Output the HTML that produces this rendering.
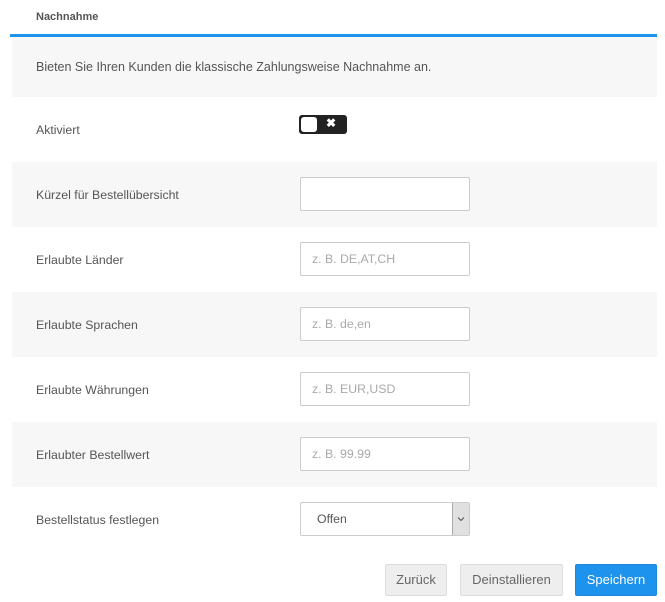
<!DOCTYPE html>
<html><head><meta charset="utf-8"><style>
*{box-sizing:border-box;margin:0;padding:0}
body{width:665px;height:602px;background:#fff;font-family:"Liberation Sans",sans-serif;font-size:12px;color:#555;position:relative;overflow:hidden}
.h{position:absolute;left:36px;top:11px;font-weight:bold;font-size:11px;color:#555}
.bar{position:absolute;left:10px;top:34px;width:647px;height:3px;background:#1e93ee}
.row{position:absolute;left:12px;width:645px;height:65px}
.g{background:#f7f7f7}
.lab{position:absolute;left:24px;top:26px;font-size:12.3px;color:#555}
.in{position:absolute;left:288px;top:15px;width:170px;height:34px;border:1px solid #ccc;border-radius:2px;background:#fff;padding:9px 11px;color:#aaa;font-size:12.3px}
.btn{position:absolute;top:564px;height:32px;border:1px solid #ddd;border-radius:2px;background:#eee;color:#666;font-size:13px;text-align:center;line-height:30px}
</style></head><body>
<div class="h">Nachnahme</div>
<div class="bar"></div>
<div class="row g" style="top:37px;height:60px"><div class="lab" style="top:23px;font-size:12.5px">Bieten Sie Ihren Kunden die klassische Zahlungsweise Nachnahme an.</div></div>
<div class="row" style="top:97px"><div class="lab">Aktiviert</div>
<div style="position:absolute;left:287px;top:18px;width:48px;height:19px;background:#222;border-radius:3px"><div style="position:absolute;left:2px;top:2px;width:16px;height:15px;background:#fff;border-radius:3px"></div><div style="position:absolute;left:27px;top:1px;color:#fff;font-weight:bold;font-size:12px">✖</div></div></div>
<div class="row g" style="top:162px"><div class="lab">Kürzel für Bestellübersicht</div><div class="in"></div></div>
<div class="row" style="top:227px"><div class="lab">Erlaubte Länder</div><div class="in">z. B. DE,AT,CH</div></div>
<div class="row g" style="top:292px"><div class="lab">Erlaubte Sprachen</div><div class="in">z. B. de,en</div></div>
<div class="row" style="top:357px"><div class="lab">Erlaubte Währungen</div><div class="in">z. B. EUR,USD</div></div>
<div class="row g" style="top:422px"><div class="lab">Erlaubter Bestellwert</div><div class="in">z. B. 99.99</div></div>
<div class="row" style="top:487px"><div class="lab">Bestellstatus festlegen</div>
<div class="in" style="color:#555;padding-left:16px">Offen<div style="position:absolute;right:0;top:0;width:17px;height:32px;background:#e0e0e0;border-left:1px solid #aaa"><svg width="16" height="32" style="position:absolute;left:0;top:0"><path d="M5 14.5l3 3 3-3" fill="none" stroke="#555" stroke-width="1"/></svg></div></div></div>
<div class="btn" style="left:385px;width:62px">Zurück</div>
<div class="btn" style="left:460px;width:103px">Deinstallieren</div>
<div class="btn" style="left:575px;width:82px;background:#1e93ee;border-color:#1b88dd;color:#fff">Speichern</div>
</body></html>
